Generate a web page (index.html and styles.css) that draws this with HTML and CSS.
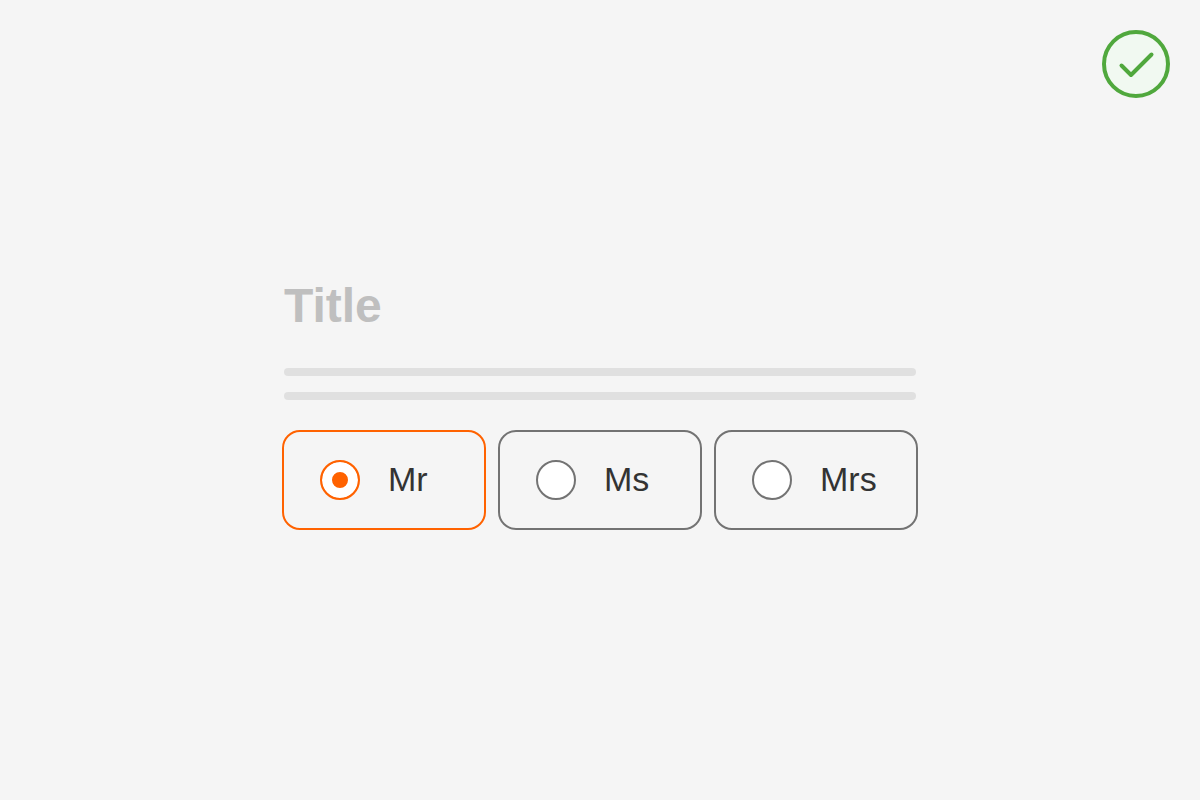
FILE: index.html
```html
<!DOCTYPE html>
<html lang="en">
<head>
  <meta charset="UTF-8" />
  <meta name="viewport" content="width=device-width, initial-scale=1" />
  <title>Title</title>
  <link rel="stylesheet" href="styles.css">
</head>
<body>
  <header class="status">
    <svg class="check" viewBox="0 0 68 68" role="img" aria-label="Correct">
      <circle cx="34" cy="34" r="32" />
      <polyline points="19.5,35.5 29,45 49.5,24.5" />
    </svg>
  </header>

  <main class="container">
    <h1 id="title">Title</h1>

    <div class="line"></div>
    <div class="line"></div>

    <div class="radio-group" role="radiogroup" aria-labelledby="title">
      <label class="option">
        <input type="radio" name="title" value="mr" checked />
        <span>Mr</span>
      </label>
      <label class="option">
        <input type="radio" name="title" value="ms" />
        <span>Ms</span>
      </label>
      <label class="option">
        <input type="radio" name="title" value="mrs" />
        <span>Mrs</span>
      </label>
    </div>
  </main>
</body>
</html>
```
FILE: styles.css
```css
* {
  box-sizing: border-box;
}
body {
  font-family: "Liberation Sans", Arial, sans-serif;
  background-color: #f5f5f5;
  color: #333;
  margin: 0;
}
.status {
  display: flex;
  justify-content: flex-end;
  padding: 30px;
}
.check {
  width: 68px;
  height: 68px;
  fill: none;
  stroke: #50a83d;
  stroke-width: 4;
  stroke-linecap: round;
  stroke-linejoin: round;
}
.check circle {
  fill: #f1f9f1;
}
.container {
  max-width: 636px;
  margin: 0 auto;
  padding-top: 148px;
}
h1 {
  color: #bfbfbf;
  font-size: 48px;
  line-height: 60px;
  margin: 0 2px 32px;
}
.line {
  height: 8px;
  margin: 0 2px 16px;
  border-radius: 4px;
  background: #e0e0e0;
}
.radio-group {
  display: flex;
  gap: 12px;
  margin-top: 30px;
}
.option {
  flex: 1;
  display: flex;
  align-items: flex-start;
  gap: 28px;
  padding: 28px 36px;
  border: 2px solid #737373;
  border-radius: 18px;
  font-size: 34px;
  line-height: 38px;
  cursor: pointer;
}
.option input {
  appearance: none;
  flex: none;
  width: 40px;
  height: 40px;
  margin: 0;
  border: 2px solid #737373;
  border-radius: 50%;
  background: #fff;
}
.option input:checked {
  border-color: #ff6200;
  background: #ff6200;
  box-shadow: inset 0 0 0 10px #fff;
}
.option:has(input:checked) {
  border-color: #ff6200;
}
```
